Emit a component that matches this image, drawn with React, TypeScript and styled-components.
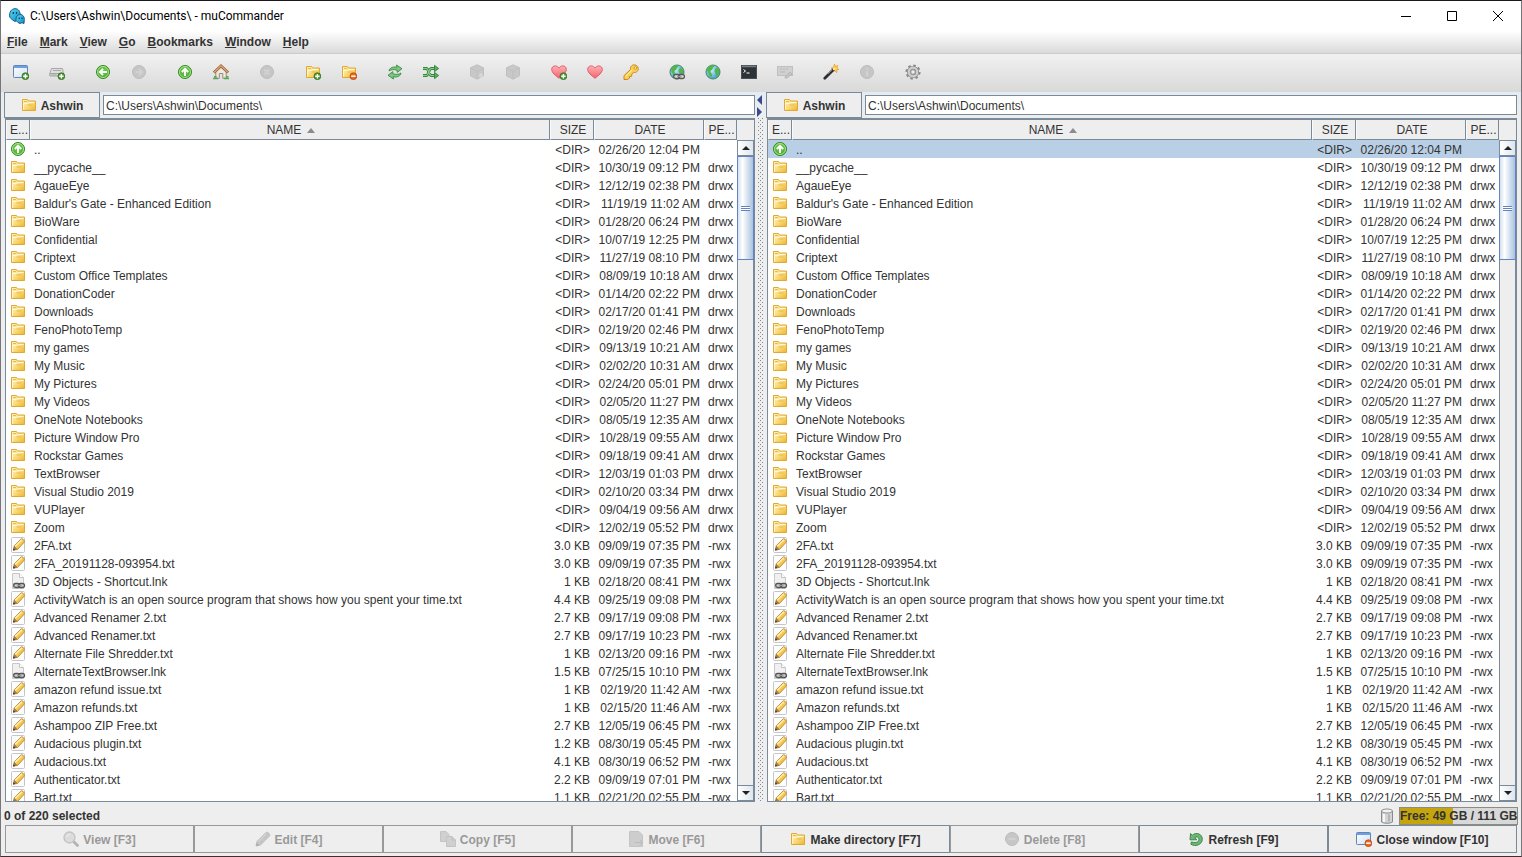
import React from "react";
import styled, { createGlobalStyle, css } from "styled-components";

const line = "#7a8a99";

const Global = createGlobalStyle`
  * { box-sizing: border-box; }
  html, body, #root { height: 100%; margin: 0; }
  body, button, input, table {
    font-family: "Liberation Sans", Arial, sans-serif;
    font-size: 12px;
    line-height: 18px;
    color: #333;
  }
  button { border: 0; padding: 0; background: none; }
`;

/* ---------- icons ---------- */

const Glyph = styled.svg.attrs({ viewBox: "0 0 16 16", "aria-hidden": true })`
  display: block;
  width: 16px;
  height: 16px;
  flex: none;
`;

const SharedDefs = styled.svg`
  display: block;
  width: 0;
  height: 0;
`;

const Defs = () => (
  <SharedDefs aria-hidden="true">
    <defs>
      <linearGradient id="gold" x1="0" y1="0" x2="1" y2="1">
        <stop offset="0" stopColor="#fff3bf" />
        <stop offset="0.5" stopColor="#fbdc7d" />
        <stop offset="1" stopColor="#ecb32c" />
      </linearGradient>
      <radialGradient id="green" cx="0.5" cy="0.4" r="0.6">
        <stop offset="0" stopColor="#7fd45c" />
        <stop offset="1" stopColor="#3ba51f" />
      </radialGradient>
      <linearGradient id="pane" x1="0" y1="0" x2="1" y2="1">
        <stop offset="0" stopColor="#ffffff" />
        <stop offset="1" stopColor="#cfe0f5" />
      </linearGradient>
      <linearGradient id="pink" x1="0" y1="0" x2="0" y2="1">
        <stop offset="0" stopColor="#ffb0b3" />
        <stop offset="1" stopColor="#f4646e" />
      </linearGradient>
      <radialGradient id="earth" cx="0.4" cy="0.35" r="0.7">
        <stop offset="0" stopColor="#c6ecff" />
        <stop offset="1" stopColor="#3f97d0" />
      </radialGradient>
      <linearGradient id="ghost" x1="0" y1="0" x2="1" y2="1">
        <stop offset="0" stopColor="#5fd4f4" />
        <stop offset="1" stopColor="#0d8fc5" />
      </linearGradient>
    </defs>
  </SharedDefs>
);

const Plus = () => (
  <g>
    <circle cx="12.4" cy="12.2" r="3.4" fill="#4f9a35" stroke="#2f6d1c" strokeWidth="0.8" />
    <path d="M12.4 10v4.400M10.200 12.2h4.400" stroke="#fff" strokeWidth="1.4" />
  </g>
);
const Minus = () => (
  <g>
    <circle cx="12.4" cy="12.2" r="3.4" fill="#ec6a1e" stroke="#b8430b" strokeWidth="0.8" />
    <path d="M10.200 12.2h4.400" stroke="#fff" strokeWidth="1.5" />
  </g>
);
const FolderShape = () => (
  <g>
    <path d="M1.500 13.500v-11h5l1 1.500h7v9.500z" fill="url(#gold)" stroke="#dfa936" />
    <path d="M2.500 12.500v-6h4l1.500-1h5.500" fill="none" stroke="#fff8d8" />
    <path d="M3 4.500h3M6.500 8h5" stroke="#eab94b" />
  </g>
);
const WindowShape = () => (
  <g>
    <rect x="0.5" y="1.5" width="14" height="12" rx="0.8" fill="url(#pane)" stroke="#5f86b8" />
    <path d="M1 3h13" stroke="#6f9fe0" strokeWidth="2" />
  </g>
);
const Disc = ({ off = false, d }: { off?: boolean; d: string }) => (
  <g>
    <circle cx="8" cy="8" r="6.500" fill={off ? "#c6c6c6" : "url(#green)"} stroke={off ? "#bdbdbd" : "#2e8a22"} />
    {!off && <circle cx="8" cy="8" r="5.500" fill="none" stroke="#c5efae" strokeWidth="0.8" />}
    <path d={d} fill="none" stroke={off ? "#d2d2d2" : "#fff"} strokeWidth="1.900" />
  </g>
);
const Heart = () => (
  <path d="M8 14.300C4.500 11.500.7 8.700.7 5.400.7 3.200 2.300 1.900 4.200 1.900c1.600 0 3 .9 3.800 2.300.8-1.400 2.200-2.300 3.800-2.300 1.900 0 3.500 1.300 3.500 3.500 0 3.300-3.800 6.100-7.300 8.900z" fill="url(#pink)" stroke="#dc5560" strokeWidth="0.900" />
);
const Globe = () => (
  <g>
    <circle cx="8" cy="8" r="7" fill="url(#earth)" stroke="#3c8a55" />
    <path d="M3 3.500c2-2 5-2.500 6-1.500.5 1-1.500 1.500-1.500 3S5 6 5.500 8s2 1.500 1.500 4-2.500 0-3.500-2.500S1 6 3 3.500zM11 4c2-.5 3 1.500 3.300 3.500.2 2-1.300 4-2.800 5-1.500 0-.5-2.500-1.500-4S9.500 5 11 4z" fill="#52b64c" />
  </g>
);
const Cube = () => (
  <g>
    <path d="M8 .8l6.500 3v8L8 15.200l-6.500-3.400v-8z" fill="#c8c8c8" stroke="#c0c0c0" />
    <path d="M1.800 4L8 7.300 14.200 4M8 7.300V15" fill="none" stroke="#bebebe" strokeWidth="0.900" />
  </g>
);
const ChainShape = () => (
  <g fill="none" stroke="#565656" strokeWidth="1.300">
    <rect x="3.700" y="10.500" width="6" height="4" rx="2" />
    <rect x="8.500" y="10.500" width="6" height="4" rx="2" />
    <path d="M7 12.500h4.500" stroke="#999" />
  </g>
);
const PencilShape = () => (
  <g>
    <path d="M3.400 13.200l.8-4.400L11 2c1.200-1 4.200 1.800 3.200 3.200l-6.600 7.200z" fill="#f6c64a" stroke="#b98534" strokeWidth="0.900" />
    <path d="M5.200 9.400l6.800-6.700" stroke="#ffeeb0" strokeWidth="1.600" />
    <path d="M3.400 13.200l.8-4.400 3.400 3.600z" fill="#9b7a55" />
    <path d="M3.100 13.500l.4-2.200 1.700 1.700z" fill="#3d342e" />
  </g>
);

const icons: Record<string, React.ReactNode> = {
  newWindow: <><WindowShape /><Plus /></>,
  closeWindow: <><WindowShape /><Minus /></>,
  addServer: (
    <>
      <path d="M2.500 4.500h11l1 5.500H.8z" fill="#dedede" stroke="#a6a6a6" />
      <path d="M.8 9.500h13.500v2.500H.8z" fill="#d2d2d2" stroke="#a6a6a6" />
      <path d="M4 6.500h8M2.500 11h5" stroke="#aaa" />
      <Plus />
    </>
  ),
  back: <Disc d="M12 8H5.500M8 4.800L4.800 8 8 11.200" />,
  forward: <Disc off d="M4.500 8h6M8 4.800L11.200 8 8 11.200" />,
  up: <Disc d="M8 12V5.500M4.800 8L8 4.800 11.200 8" />,
  home: (
    <>
      <path d="M2.800 7.500v6.800h3.500V9.500h3.500v4.800h3.400V7.500L8 3z" fill="#eeeae2" stroke="#8b8273" strokeWidth="0.900" />
      <path d="M.9 8.600L8 1.900l7.100 6.700" fill="none" stroke="#9c6238" strokeWidth="2.800" />
      <path d="M1.200 8.300L8 1.900 14.800 8.300" fill="none" stroke="#dca678" strokeWidth="1.300" />
      <path d="M0 14.500h5M11 14.500h5M1 12.800h2.500M13 12.800h2.500" stroke="#5aa552" strokeWidth="1.500" />
    </>
  ),
  stop: <Disc off d="M5.500 5.500l5 5M10.500 5.500l-5 5" />,
  addFolder: <><FolderShape /><Plus /></>,
  removeFolder: <><FolderShape /><Minus /></>,
  swap: (
    <>
      <path d="M2 7c.6-3.200 3.500-4.500 8-3.800L9.500 1l5.500 3.700-4.800 3.700-.2-2.300C7 5.300 4 5.500 2 7z" fill="#7cc77c" stroke="#3a8a45" strokeWidth="0.900" />
      <path d="M14 9c-.6 3.200-3.500 4.500-8 3.800l.5 2.200L1 11.300l4.800-3.700.2 2.300c3 .8 6 .6 8-.900z" fill="#7cc77c" stroke="#3a8a45" strokeWidth="0.900" />
    </>
  ),
  same: (
    <g fill="none" stroke="#358642" strokeWidth="2.800">
      <path d="M0 4.500h3.500c2 0 2 7 5 7H12M0 11.500h3.500c2 0 2-7 5-7H12" />
      <path d="M0 4.500h3.500c2 0 2 7 5 7H12M0 11.500h3.500c2 0 2-7 5-7H12" stroke="#8ccf8a" strokeWidth="1.100" />
      <path d="M11.500 1.300l4.200 3.200-4.200 3.200zM11.500 8.300l4.200 3.200-4.200 3.200z" fill="#5cad60" stroke="#2f7d3c" strokeWidth="0.800" />
    </g>
  ),
  pack: <><Cube /><path d="M12 9v5M9.700 11.500h4.600" stroke="#d9d9d9" strokeWidth="1.500" /></>,
  unpack: <Cube />,
  addBookmark: <><Heart /><Plus /></>,
  bookmark: <Heart />,
  key: (
    <>
      <path d="M7.600 5.400C6.700 2.400 9.600.3 12.300 1s4 4.200 2 6.300c-1.100 1.100-2.500 1.400-3.700 1.100L8.800 10.400l-.2 1.900-2 .2-.2 1.800-2 1.200H1v-3.800z" fill="#fbcf55" stroke="#c8871d" />
      <path d="M2.500 12.500L9 6" stroke="#fff0ae" />
      <circle cx="12.300" cy="4" r="1.300" fill="#f7f0df" stroke="#c8871d" strokeWidth="0.800" />
    </>
  ),
  connect: (
    <>
      <Globe />
      <rect x="5" y="10" width="10.500" height="5" rx="1.500" fill="#ddd" />
      <g transform="translate(1 0)"><ChainShape /></g>
    </>
  ),
  globe: <Globe />,
  terminal: (
    <>
      <rect x="0.500" y="1.500" width="15" height="13" fill="#2d3236" stroke="#4c4f52" />
      <path d="M1 2.500h14" stroke="#777f86" strokeWidth="1.500" />
      <path d="M2.500 5.500l2 1.500-2 1.500M5.500 9h3" fill="none" stroke="#fff" />
    </>
  ),
  run: (
    <>
      <rect x="0.500" y="2.500" width="15" height="9" fill="#d0d0d0" stroke="#c0c0c0" />
      <path d="M3 5h2M6 5h2M9 5h2M3 8h5M8 13l5-5 2 2-5 4H8z" fill="#c4c4c4" stroke="#b8b8b8" />
    </>
  ),
  wand: (
    <>
      <path d="M11.500 0l.8 2.500L15 1.500l-1.200 2.400L16 5.500l-2.500.5.500 2.500-2.400-1.500L9.500 8l.4-2.500L8 4l2.500-.6z" fill="#fcd04a" stroke="#ef9b22" strokeWidth="0.700" />
      <path d="M1.800 14.200L10.500 5.500" stroke="#2d2d33" strokeWidth="2.800" strokeLinecap="round" />
      <path d="M5 10l4-4" stroke="#8d8d98" strokeWidth="0.900" />
      <path d="M10.200 5.800l1.500-1.500" stroke="#fff4c8" strokeWidth="2.200" />
    </>
  ),
  info: <Disc off d="M8 4v1.800M8 7v5" />,
  gear: (
    <>
      <circle cx="8" cy="8" r="6.600" fill="none" stroke="#8a8a8a" strokeWidth="2" strokeDasharray="2.600 2.584" />
      <circle cx="8" cy="8" r="4.300" fill="none" stroke="#858585" strokeWidth="3.600" />
      <circle cx="8" cy="8" r="4.300" fill="none" stroke="#cfcfcf" strokeWidth="2.200" />
      <circle cx="8" cy="8" r="2.200" fill="#ededed" stroke="#858585" strokeWidth="0.800" />
    </>
  ),
  folder: <FolderShape />,
  text: (
    <>
      <rect x="1.500" y="0.500" width="13" height="15" rx="1" fill="#fdfdfd" stroke="#c3c7cc" />
      <PencilShape />
    </>
  ),
  link: (
    <>
      <path d="M2.500 15.500V.5h7l4 4v11z" fill="#f0f0f0" stroke="#c8c8c8" />
      <path d="M9.500.5v4h4" fill="#fff" stroke="#c2c2c2" />
      <path d="M3 10.200h10.500v5H3z" fill="#ccc" />
      <ChainShape />
    </>
  ),
  view: (
    <>
      <path d="M10 10l4.500 4.500" stroke="#b4b4b4" strokeWidth="2.800" strokeLinecap="round" />
      <circle cx="6.500" cy="6.500" r="5.500" fill="#dcdcdc" stroke="#c2c2c2" strokeWidth="1.300" />
      <path d="M3.800 6a3 3 0 0 1 3-2.500" fill="none" stroke="#eee" />
    </>
  ),
  edit: (
    <>
      <path d="M1 15l1-4.500L11 1.500c1.300-1.100 4.600 1.600 3.500 3.500L5.500 14z" fill="#c6c6c6" stroke="#bebebe" />
      <path d="M3.500 10.500l8-8" stroke="#dadada" />
      <path d="M1 15l.8-3 2.400 2.200z" fill="#aaa" />
    </>
  ),
  copy: (
    <>
      <path d="M.5 10.500V.500h5.500l3 3v7z" fill="#d0d0d0" stroke="#c4c4c4" />
      <path d="M6.500 15.500v-10H12l3.500 3.500v6.500z" fill="#d0d0d0" stroke="#c4c4c4" />
      <path d="M12 5.500v3.500h3.500" fill="none" stroke="#bfbfbf" />
    </>
  ),
  move: (
    <>
      <path d="M1.500 15.500V.500H11l3.500 3.500v11.500z" fill="#cdcdcd" stroke="#c4c4c4" />
      <path d="M7 11.500h7M12 9l3 2.500-3 2.500" fill="none" stroke="#bbb" />
    </>
  ),
  remove: <Disc off d="M4.500 8h7" />,
  refresh: (
    <path d="M2.500 2.500l1.800 1.700C8.500.5 14.500 3.200 14.300 8.400c-.2 5-6.600 7.900-11.500 4.800l.8-2.400c3 1.700 7.200.6 7.400-2.500.1-2.300-2.600-3.100-4.200-1.700l2 2.200H2z" fill="#6cb974" stroke="#357f45" strokeWidth="0.900" />
  ),
  drive: (
    <>
      <path d="M2.500 3v11c2 1.700 9 1.700 11 0V3z" fill="#d3d3d3" stroke="#8a8a8a" />
      <ellipse cx="8" cy="3" rx="5.500" ry="2" fill="#f2f2f2" stroke="#909090" />
      <path d="M5 6v8" stroke="#f7f7f7" strokeWidth="2" />
      <path d="M10 6.500v7" stroke="#aaa" strokeWidth="1.500" />
    </>
  ),
  app: (
    <>
      <path d="M.7 9C0 4 2.500.7 6 .7S11 3 11.500 8l-.5 5.300-3-1-2 1.200-2.500-1.500z" fill="url(#ghost)" stroke="#0b5f8c" />
      <path d="M7 12.500C6.500 9 8.500 6.500 11.300 6.500s4.200 2.500 4 5l-.3 4-2-.8-2 .8-2-1z" fill="url(#ghost)" stroke="#0b4f78" strokeWidth="0.900" />
      <path d="M4.300 4v2M7.500 4v2M10.200 9.500v1.500M13 9.500v1.500" stroke="#063650" strokeWidth="1.200" />
    </>
  ),
};

const Icon = ({ name }: { name: string }) => <Glyph>{icons[name]}</Glyph>;

/* ---------- window frame ---------- */

const Frame = styled.div`
  display: flex;
  flex-direction: column;
  height: 100vh;
  min-width: 960px;
  background: #eee;
  border: 1px solid #75757b;
  border-top-color: #1b161c;
  border-bottom-color: #4a2a30;
`;

const TitleBar = styled.header`
  display: flex;
  align-items: center;
  flex: none;
  height: 30px;
  padding-left: 8px;
  background: #fff;
`;

const Title = styled.h1`
  flex: 1;
  margin: 0 0 0 5px;
  font: 400 12px/18px Roboto, "Open Sans", sans-serif;
  color: #000;
`;

const CaptionButton = styled.button`
  display: grid;
  place-items: center;
  width: 46px;
  height: 28px;
  svg { width: 12px; height: 12px; fill: none; stroke: #000; }
`;

const MenuBar = styled.nav`
  display: flex;
  gap: 12px;
  flex: none;
  height: 23px;
  padding: 2px 6px 0;
  background: linear-gradient(#fff, #dadada);
  border-bottom: 1px solid #ccc;
`;

const MenuItem = styled.button`
  font-weight: 700;
  height: 18px;
`;

const ToolBar = styled.div`
  display: flex;
  gap: 10px;
  flex: none;
  height: 38px;
  padding: 0 2px;
  background: linear-gradient(#f1f1f1, #d9d9d9);
`;

const ToolGroup = styled.div`
  display: flex;
`;

const ToolButton = styled.button`
  display: grid;
  place-items: center;
  width: 36px;
  height: 36px;
`;

/* ---------- panels ---------- */

const Panels = styled.main`
  display: flex;
  flex: 1;
  min-height: 0;
  padding: 0 3px;
  background: linear-gradient(#e4ebf2, #eee 28px);
`;

const Panel = styled.section`
  display: flex;
  flex-direction: column;
  flex: 1;
  min-width: 0;
`;

const Divider = styled.div`
  display: flex;
  flex-direction: column;
  width: 10px;
  padding: 2px 2px 0 1px;
`;

const CollapseButton = styled.button`
  height: 12px;
  svg { display: block; width: 6px; height: 10px; fill: #3b4a8c; }
`;

const Grip = styled.div`
  flex: 1;
  width: 6px;
  margin-left: 1px;
  background-image: conic-gradient(from 270deg at 1px 1px, ${line} 90deg, transparent 0),
    conic-gradient(from 270deg at 1px 1px, ${line} 90deg, transparent 0);
  background-size: 4px 4px;
  background-position: 0 0, 2px 2px;
`;

const PathBar = styled.div`
  display: flex;
  gap: 3px;
  flex: none;
  height: 26px;
`;

const DriveButton = styled.button`
  display: flex;
  align-items: center;
  justify-content: center;
  gap: 4px;
  width: 96px;
  border: 1px solid ${line};
  background: #eee;
  font-weight: 700;
`;

const PathInput = styled.input`
  flex: 1;
  min-width: 0;
  height: 20px;
  margin: 3px 1px 0 0;
  padding: 2px 2px 0;
  border: 1px solid ${line};
  border-radius: 0;
  background: #fff;
  line-height: 16px;
  outline: 0;
`;

const ButtonLabel = styled.span`
  padding-top: 2px;
`;

const Listing = styled.div`
  display: flex;
  flex: 1;
  min-height: 0;
  overflow: hidden;
  margin: 0 1px;
  border: 1px solid ${line};
  border-top: 2px solid ${line};
  background: #fff;
`;

const Files = styled.table`
  flex: 1;
  min-width: 0;
  width: 100%;
  align-self: flex-start;
  table-layout: fixed;
  border-collapse: separate;
  border-spacing: 0;
`;

const Heading = styled.th`
  height: 20px;
  padding: 1px 0 0 2px;
  border-left: 1px solid #fafafa;
  border-right: 1px solid ${line};
  border-bottom: 1px solid ${line};
  background: #eee;
  font-weight: 400;
  text-align: center;
  white-space: nowrap;
  svg { width: 8px; height: 5px; margin-left: 6px; vertical-align: 1px; }
`;

const Row = styled.tr<{ $selected: boolean }>`
  background: ${(p) => (p.$selected ? "#b8cfe5" : "#fff")};
`;

const Cell = styled.td<{ $align?: "right" }>`
  height: 18px;
  padding: 2px 4px 0;
  overflow: hidden;
  line-height: 16px;
  white-space: nowrap;
  text-align: ${(p) => p.$align ?? "left"};
`;

const IconCell = styled.td`
  height: 18px;
  padding: 0 4px;
`;

const ScrollColumn = styled.div`
  display: flex;
  flex-direction: column;
  flex: none;
  width: 17px;
  background: #eee;
  padding-top: 20px;
`;

const ArrowButton = styled.button`
  display: grid;
  place-items: center;
  flex: none;
  height: 16px;
  border: 1px solid ${line};
  background: linear-gradient(90deg, #fff, #dde6ee);
  svg { width: 8px; height: 4px; fill: #222; }
`;

const Track = styled.div`
  flex: 1;
  border: solid ${line};
  border-width: 0 1px;
`;

const Thumb = styled.div`
  display: grid;
  place-items: center;
  height: 104px;
  margin: 0 -1px;
  border: 1px solid #6382bf;
  background: linear-gradient(90deg, #d4e1ef, #fff 30%, #a9c3df);
  &::after {
    content: "";
    width: 9px;
    height: 5px;
    background: repeating-linear-gradient(#6382bf 0 1px, #fff 1px 2px);
  }
`;

/* ---------- bottom bars ---------- */

const StatusBar = styled.div`
  display: flex;
  align-items: center;
  gap: 4px;
  flex: none;
  height: 23px;
  padding: 4px 3px 0;
  font-weight: 700;
`;

const Selection = styled.span`
  flex: 1;
`;

const FreeSpace = styled.span`
  width: 119px;
  height: 18px;
  border: 1px solid #8c8c80;
  background: linear-gradient(90deg, #c5a50e 45%, #d8d8d8 45%);
  line-height: 17px;
  text-align: center;
  white-space: nowrap;
`;

const CommandBar = styled.footer`
  display: grid;
  grid-template-columns: repeat(8, 1fr);
  flex: none;
  padding: 0 4px 3px;
`;

const Command = styled.button`
  display: flex;
  align-items: center;
  justify-content: center;
  gap: 4px;
  height: 28px;
  border: 1px solid ${line};
  background: #eee;
  font-weight: 700;
  ${(p) =>
    p.disabled &&
    css`
      border-color: #999;
      color: #999;
    `}
`;

/* ---------- data ---------- */

const menus = ["File", "Mark", "View", "Go", "Bookmarks", "Window", "Help"];

const tools: [string, string, boolean?][][] = [
  [["newWindow", "New window"], ["addServer", "Add tab"]],
  [["back", "Go back"], ["forward", "Go forward", true]],
  [["up", "Go to parent"], ["home", "Go home"]],
  [["stop", "Stop", true]],
  [["addFolder", "Mark group"], ["removeFolder", "Unmark group"]],
  [["swap", "Swap folders"], ["same", "Set same folder"]],
  [["pack", "Pack", true], ["unpack", "Unpack", true]],
  [["addBookmark", "Add bookmark"], ["bookmark", "Edit bookmarks"], ["key", "Edit credentials"]],
  [["connect", "Connect to server"], ["globe", "Server connections"], ["terminal", "Run command"], ["run", "Email files", true]],
  [["wand", "Reveal in desktop"], ["info", "Show properties", true]],
  [["gear", "Preferences"]],
];

const folders: [string, string][] = [
  ["__pycache__", "10/30/19 09:12 PM"],
  ["AgaueEye", "12/12/19 02:38 PM"],
  ["Baldur's Gate - Enhanced Edition", "11/19/19 11:02 AM"],
  ["BioWare", "01/28/20 06:24 PM"],
  ["Confidential", "10/07/19 12:25 PM"],
  ["Criptext", "11/27/19 08:10 PM"],
  ["Custom Office Templates", "08/09/19 10:18 AM"],
  ["DonationCoder", "01/14/20 02:22 PM"],
  ["Downloads", "02/17/20 01:41 PM"],
  ["FenoPhotoTemp", "02/19/20 02:46 PM"],
  ["my games", "09/13/19 10:21 AM"],
  ["My Music", "02/02/20 10:31 AM"],
  ["My Pictures", "02/24/20 05:01 PM"],
  ["My Videos", "02/05/20 11:27 PM"],
  ["OneNote Notebooks", "08/05/19 12:35 AM"],
  ["Picture Window Pro", "10/28/19 09:55 AM"],
  ["Rockstar Games", "09/18/19 09:41 AM"],
  ["TextBrowser", "12/03/19 01:03 PM"],
  ["Visual Studio 2019", "02/10/20 03:34 PM"],
  ["VUPlayer", "09/04/19 09:56 AM"],
  ["Zoom", "12/02/19 05:52 PM"],
];

const files: [string, string, string][] = [
  ["2FA.txt", "3.0 KB", "09/09/19 07:35 PM"],
  ["2FA_20191128-093954.txt", "3.0 KB", "09/09/19 07:35 PM"],
  ["3D Objects - Shortcut.lnk", "1 KB", "02/18/20 08:41 PM"],
  ["ActivityWatch is an open source program that shows how you spent your time.txt", "4.4 KB", "09/25/19 09:08 PM"],
  ["Advanced Renamer 2.txt", "2.7 KB", "09/17/19 09:08 PM"],
  ["Advanced Renamer.txt", "2.7 KB", "09/17/19 10:23 PM"],
  ["Alternate File Shredder.txt", "1 KB", "02/13/20 09:16 PM"],
  ["AlternateTextBrowser.lnk", "1.5 KB", "07/25/15 10:10 PM"],
  ["amazon refund issue.txt", "1 KB", "02/19/20 11:42 AM"],
  ["Amazon refunds.txt", "1 KB", "02/15/20 11:46 AM"],
  ["Ashampoo ZIP Free.txt", "2.7 KB", "12/05/19 06:45 PM"],
  ["Audacious plugin.txt", "1.2 KB", "08/30/19 05:45 PM"],
  ["Audacious.txt", "4.1 KB", "08/30/19 06:52 PM"],
  ["Authenticator.txt", "2.2 KB", "09/09/19 07:01 PM"],
  ["Bart.txt", "1.1 KB", "02/21/20 02:55 PM"],
];

const entries = [
  { icon: "up", name: "..", size: "<DIR>", date: "02/26/20 12:04 PM", perms: "" },
  ...folders.map(([name, date]) => ({ icon: "folder", name, size: "<DIR>", date, perms: "drwx" })),
  ...files.map(([name, size, date]) => ({
    icon: name.endsWith(".lnk") ? "link" : "text",
    name,
    size,
    date,
    perms: "-rwx",
  })),
];

const commands: [string, string, boolean][] = [
  ["view", "View [F3]", true],
  ["edit", "Edit [F4]", true],
  ["copy", "Copy [F5]", true],
  ["move", "Move [F6]", true],
  ["folder", "Make directory [F7]", false],
  ["remove", "Delete [F8]", true],
  ["refresh", "Refresh [F9]", false],
  ["closeWindow", "Close window [F10]", false],
];

const FilePanel = ({ side, active = false }: { side: string; active?: boolean }) => (
  <Panel aria-label={`${side} panel`}>
    <PathBar>
      <DriveButton>
        <Icon name="folder" />
        <ButtonLabel>Ashwin</ButtonLabel>
      </DriveButton>
      <PathInput aria-label={`${side} path`} defaultValue={"C:\\Users\\Ashwin\\Documents\\"} />
    </PathBar>
    <Listing>
      <Files>
        <colgroup>
          <col width="24" />
          <col />
          <col width="44" />
          <col width="110" />
          <col width="33" />
        </colgroup>
        <thead>
          <tr>
            <Heading>E...</Heading>
            <Heading>
              NAME
              <svg viewBox="0 0 8 5" aria-hidden="true"><path d="M0 5l4-5 4 5z" fill="#8c8c8c" /></svg>
            </Heading>
            <Heading>SIZE</Heading>
            <Heading>DATE</Heading>
            <Heading>PE...</Heading>
          </tr>
        </thead>
        <tbody>
          {entries.map((e, i) => (
            <Row key={e.name} $selected={active && i === 0}>
              <IconCell><Icon name={e.icon} /></IconCell>
              <Cell>{e.name}</Cell>
              <Cell $align="right">{e.size}</Cell>
              <Cell $align="right">{e.date}</Cell>
              <Cell>{e.perms}</Cell>
            </Row>
          ))}
        </tbody>
      </Files>
      <ScrollColumn>
        <ArrowButton aria-label="Scroll up"><svg viewBox="0 0 8 4"><path d="M0 4l4-4 4 4z" /></svg></ArrowButton>
        <Track><Thumb /></Track>
        <ArrowButton aria-label="Scroll down"><svg viewBox="0 0 8 4"><path d="M0 0l4 4 4-4z" /></svg></ArrowButton>
      </ScrollColumn>
    </Listing>
  </Panel>
);

export default function App() {
  return (
    <>
      <Global />
      <Frame>
        <Defs />
        <TitleBar>
          <Icon name="app" />
          <Title>{"C:\\Users\\Ashwin\\Documents\\ - muCommander"}</Title>
          <CaptionButton aria-label="Minimize"><svg viewBox="0 0 12 12"><path d="M1 6.500h10" /></svg></CaptionButton>
          <CaptionButton aria-label="Maximize"><svg viewBox="0 0 12 12"><path d="M1.500 1.500h9v9h-9z" /></svg></CaptionButton>
          <CaptionButton aria-label="Close"><svg viewBox="0 0 12 12"><path d="M1 1l10 10M11 1L1 11" /></svg></CaptionButton>
        </TitleBar>
        <MenuBar>
          {menus.map((m) => (
            <MenuItem key={m}><u>{m[0]}</u>{m.slice(1)}</MenuItem>
          ))}
        </MenuBar>
        <ToolBar role="toolbar">
          {tools.map((group, i) => (
            <ToolGroup key={i}>
              {group.map(([icon, label, off]) => (
                <ToolButton key={icon} aria-label={label} disabled={off}><Icon name={icon} /></ToolButton>
              ))}
            </ToolGroup>
          ))}
        </ToolBar>
        <Panels>
          <FilePanel side="Left" />
          <Divider>
            <CollapseButton aria-label="Collapse left"><svg viewBox="0 0 6 10"><path d="M5 0v10L0 5z" /></svg></CollapseButton>
            <CollapseButton aria-label="Collapse right"><svg viewBox="0 0 6 10"><path d="M0 0v10l5-5z" /></svg></CollapseButton>
            <Grip />
          </Divider>
          <FilePanel side="Right" active />
        </Panels>
        <StatusBar>
          <Selection>0 of 220 selected</Selection>
          <Icon name="drive" />
          <FreeSpace>Free: 49 GB / 111 GB</FreeSpace>
        </StatusBar>
        <CommandBar>
          {commands.map(([icon, label, off]) => (
            <Command key={label} disabled={off}>
              <Icon name={icon} />
              <ButtonLabel>{label}</ButtonLabel>
            </Command>
          ))}
        </CommandBar>
      </Frame>
    </>
  );
}
